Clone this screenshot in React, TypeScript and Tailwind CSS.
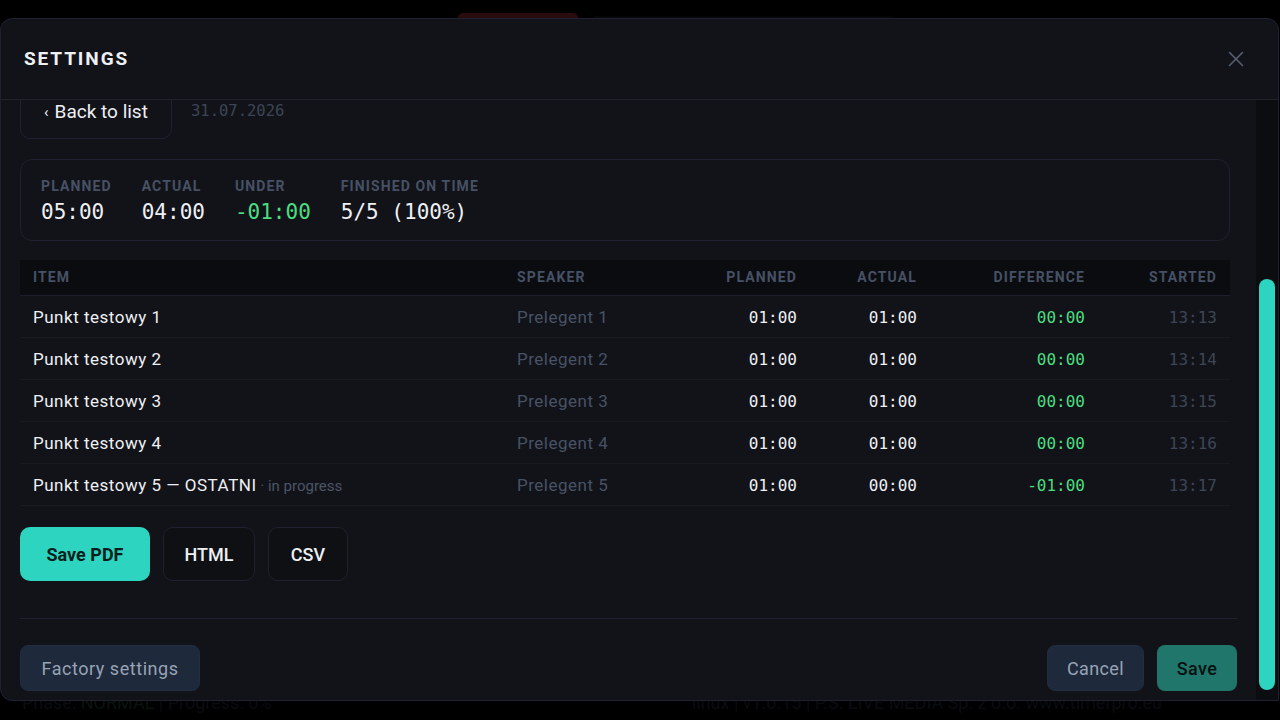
import { X } from 'lucide-react';

const UI = { fontFamily: 'Roboto, "Noto Sans", sans-serif' };
const MONO = { fontFamily: '"DejaVu Sans Mono", "Liberation Mono", monospace' };

interface Row {
  item: string;
  note?: string;
  speaker: string;
  planned: string;
  actual: string;
  diff: string;
  started: string;
}

const rows: Row[] = [
  { item: 'Punkt testowy 1', speaker: 'Prelegent 1', planned: '01:00', actual: '01:00', diff: '00:00', started: '13:13' },
  { item: 'Punkt testowy 2', speaker: 'Prelegent 2', planned: '01:00', actual: '01:00', diff: '00:00', started: '13:14' },
  { item: 'Punkt testowy 3', speaker: 'Prelegent 3', planned: '01:00', actual: '01:00', diff: '00:00', started: '13:15' },
  { item: 'Punkt testowy 4', speaker: 'Prelegent 4', planned: '01:00', actual: '01:00', diff: '00:00', started: '13:16' },
  { item: 'Punkt testowy 5 — OSTATNI', note: 'in progress', speaker: 'Prelegent 5', planned: '01:00', actual: '00:00', diff: '-01:00', started: '13:17' }
];

const summary = [
  { label: 'PLANNED', value: '05:00', green: false },
  { label: 'ACTUAL', value: '04:00', green: false },
  { label: 'UNDER', value: '-01:00', green: true },
  { label: 'FINISHED ON TIME', value: '5/5 (100%)', green: false }
];

const grid = 'grid grid-cols-[484px_180px_100px_120px_168px_132px] items-center px-[13px]';

export default function App() {
  return (
    <div className="relative h-[720px] w-[1280px] overflow-hidden bg-black" style={UI}>
      {/* page behind the dialog */}
      <div className="flex h-[18px] items-end pl-[458px]">
        <div className="h-[5px] w-[120px] rounded-t-[10px] bg-[#2a0b0e]" />
        <div className="ml-[15px] h-[2px] w-[300px] rounded-t-[10px] bg-[#050608]" />
      </div>
      <div className="absolute bottom-0 left-0 right-0 flex h-[30px] items-end justify-between pb-[4px] pl-[22px] text-[18px] text-[#0a0c10]">
        <span>
          Phase: <span className="text-[#08150e]">NORMAL</span> | Progress: 0%
        </span>
        <span className="pr-[118px]">linux | v1.0.15 | P.S. LIVE MEDIA Sp. z o.o. www.timerpro.eu</span>
      </div>

      {/* dialog */}
      <div className="absolute left-0 top-[18px] flex h-[683px] w-[1279px] flex-col overflow-hidden rounded-t-[12px] rounded-bl-[12px] border border-[#1f2031] bg-[#121318]">
        <div className="flex h-[81px] shrink-0 items-center justify-between border-b border-[#20222c] pl-[23px] pr-[29px]">
          <h2 className="text-[19px] font-bold tracking-[0.1em] text-[#eef0f4]">SETTINGS</h2>
          <X className="h-[26px] w-[26px] text-[#556072]" strokeWidth={1.4} />
        </div>

        <div className="flex min-h-0 flex-1">
          <div className="flex min-w-0 flex-1 flex-col overflow-hidden pl-[19px] pr-[19px]">
            <div className="mt-[-15px] flex flex-col pr-[7px]">
              <div className="flex items-center gap-[19px]">
                <button className="flex h-[54px] w-[152px] items-center justify-center gap-[6px] rounded-[10px] border border-[#1f2130] text-[19px] text-[#eef0f4]">
                  <span className="text-[15px]">‹</span> Back to list
                </button>
                <span className="text-[15.5px] text-[#3c4555]" style={MONO}>31.07.2026</span>
              </div>

              <div className="mt-[20px] flex h-[82px] items-center gap-[30px] rounded-[12px] border border-[#1f2130] px-[20px]">
                {summary.map((s) => (
                  <div key={s.label} className="flex flex-col gap-[2px]">
                    <span className="text-[14px] font-bold tracking-[0.08em] text-[#465165]">{s.label}</span>
                    <span
                      className={`text-[21px] leading-[26px] ${s.green ? 'text-[#4ade80]' : 'text-[#eef0f4]'}`}
                      style={MONO}
                    >
                      {s.value}
                    </span>
                  </div>
                ))}
              </div>

              <div className="mt-[19px] flex flex-col">
                <div className={`${grid} h-[36px] border-b border-[#1c1e28] bg-[#0b0c10] text-[14px] font-bold tracking-[0.08em] text-[#465165]`}>
                  <span>ITEM</span>
                  <span>SPEAKER</span>
                  <span className="text-right">PLANNED</span>
                  <span className="text-right">ACTUAL</span>
                  <span className="text-right">DIFFERENCE</span>
                  <span className="text-right">STARTED</span>
                </div>
                {rows.map((r) => (
                  <div key={r.item} className={`${grid} h-[42px] border-b border-[#181a21] pt-[3px] text-[17px] tracking-[0.03em]`}>
                    <span className="truncate text-[#eef0f4]">
                      {r.item}
                      {r.note && <span className="text-[15px] tracking-normal text-[#4b5567]"> · {r.note}</span>}
                    </span>
                    <span className="text-[#475266]">{r.speaker}</span>
                    <span className="text-right text-[16px] tracking-normal text-[#eef0f4]" style={MONO}>{r.planned}</span>
                    <span className="text-right text-[16px] tracking-normal text-[#eef0f4]" style={MONO}>{r.actual}</span>
                    <span className="text-right text-[16px] tracking-normal text-[#4ade80]" style={MONO}>{r.diff}</span>
                    <span className="text-right text-[16px] tracking-normal text-[#3c4656]" style={MONO}>{r.started}</span>
                  </div>
                ))}
              </div>

              <div className="mt-[21px] flex gap-[13px]">
                <button className="h-[54px] w-[130px] rounded-[10px] bg-[#2dd4bf] text-[18px] font-bold text-[#0a1f1c]">
                  Save PDF
                </button>
                <button className="h-[54px] w-[92px] rounded-[10px] border border-[#1f2130] bg-[#0f1014] text-[18px] font-medium text-[#eef0f4]">
                  HTML
                </button>
                <button className="h-[54px] w-[80px] rounded-[10px] border border-[#1f2130] bg-[#0f1014] text-[18px] font-medium text-[#eef0f4]">
                  CSV
                </button>
              </div>
            </div>

            <div className="mt-[37px] border-t border-[#1f2130]" />

            <div className="mt-[26px] flex items-center justify-between">
              <button className="h-[46px] w-[180px] rounded-[8px] border border-[#232d40] bg-[#1e293b] pt-[1px] text-[18px] tracking-[0.03em] text-[#98a3b5]">
                Factory settings
              </button>
              <div className="flex gap-[13px]">
                <button className="h-[46px] w-[97px] rounded-[8px] border border-[#232d40] bg-[#1e293b] pt-[1px] text-[18px] tracking-[0.02em] text-[#98a3b5]">
                  Cancel
                </button>
                <button className="h-[46px] w-[80px] rounded-[8px] bg-[#20766b] pt-[1px] text-[18px] font-medium tracking-[0.02em] text-[#06110f]">
                  Save
                </button>
              </div>
            </div>
          </div>

          <div className="flex w-[22px] shrink-0 flex-col bg-[#0c0d10] px-[3px] pb-[10px] pt-[179px]">
            <div className="flex-1 rounded-full bg-[#2dd4bf]" />
          </div>
        </div>
      </div>
    </div>
  );
}
